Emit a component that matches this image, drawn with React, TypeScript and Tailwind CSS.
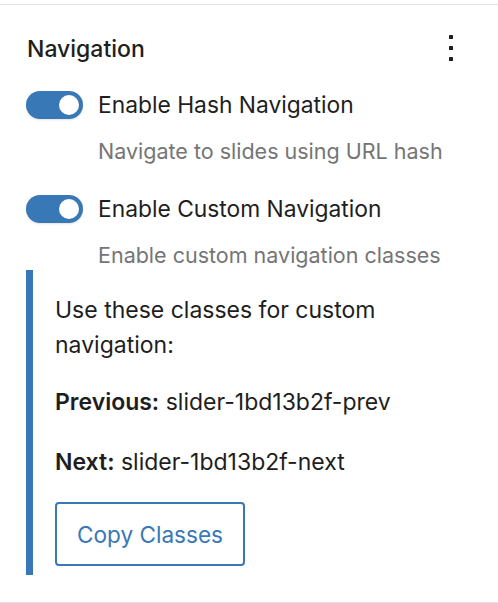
import React, { useState } from "react";

const FONT = { fontFamily: "Inter, 'Noto Sans', sans-serif" };

function Toggle({ checked, onChange, label, help }: { checked: boolean; onChange: (v: boolean) => void; label: string; help: string }) {
  return (
    <div>
      <label className="flex items-center gap-4 h-[28px] cursor-pointer">
        <button
          type="button"
          onClick={() => onChange(!checked)}
          className={`relative w-[57px] h-[28px] rounded-full shrink-0 shadow-[0_1px_2px_rgba(0,0,0,0.12)] ${checked ? "bg-[#3878b7]" : "bg-white border-2 border-[#1e1e1e]"}`}
        >
          <span
            className={`absolute top-[4px] w-[20px] h-[20px] rounded-full ${checked ? "right-[4px] bg-white" : "left-[4px] bg-[#1e1e1e]"}`}
          />
        </button>
        <span className="-ml-[1px] text-[22.8px] leading-[28px] text-[#1e1e1e]">{label}</span>
      </label>
      <p className="ml-[72px] mt-[17px] text-[21.5px] leading-[30px] text-[#757575]">{help}</p>
    </div>
  );
}

export default function App() {
  const [hash, setHash] = useState(true);
  const [custom, setCustom] = useState(true);

  return (
    <div className="bg-white w-[498px] h-[603px] pt-[4px]" style={FONT}>
      <div className="border-t border-b border-[#e0e0e0] px-[26px] pt-[27px] pb-[27px]">
        {/* Header */}
        <div className="flex items-center justify-between h-[34px]">
          <h2 className="pl-[1px] text-[23px] font-medium text-[#1e1e1e]">Navigation</h2>
          <button className="w-[40px] h-[40px] mr-[1px] flex items-center justify-center -mt-[3px]">
            <svg width="6" height="27" viewBox="0 0 6 27">
              <rect x="1" y="1" width="4" height="4" rx="0.6" fill="#1e1e1e" />
              <rect x="1" y="12" width="4" height="4" rx="0.6" fill="#1e1e1e" />
              <rect x="1" y="23" width="4" height="4" rx="0.6" fill="#1e1e1e" />
            </svg>
          </button>
        </div>

        <div className="mt-[25px]">
          <Toggle checked={hash} onChange={setHash} label="Enable Hash Navigation" help="Navigate to slides using URL hash" />
        </div>
        <div className="mt-[29px]">
          <Toggle checked={custom} onChange={setCustom} label="Enable Custom Navigation" help="Enable custom navigation classes" />
        </div>

        {custom && (
          <div className="border-l-[7px] border-[#3878b7] pl-[22px] pt-[23px] pb-[9px] text-[23px] leading-[35px] text-[#1e1e1e]">
            <p className="max-w-[385px]">Use these classes for custom navigation:</p>
            <p className="mt-[22px]">
              <strong className="font-semibold">Previous:</strong> slider-1bd13b2f-prev
            </p>
            <p className="mt-[25px]">
              <strong className="font-semibold">Next:</strong> slider-1bd13b2f-next
            </p>
            <button className="mt-[22px] w-[190px] h-[64px] border-2 border-[#3878b7] rounded-[4px] text-[22.6px] text-[#3878b7] hover:bg-[#f0f6fc]">
              Copy Classes
            </button>
          </div>
        )}
      </div>
    </div>
  );
}
